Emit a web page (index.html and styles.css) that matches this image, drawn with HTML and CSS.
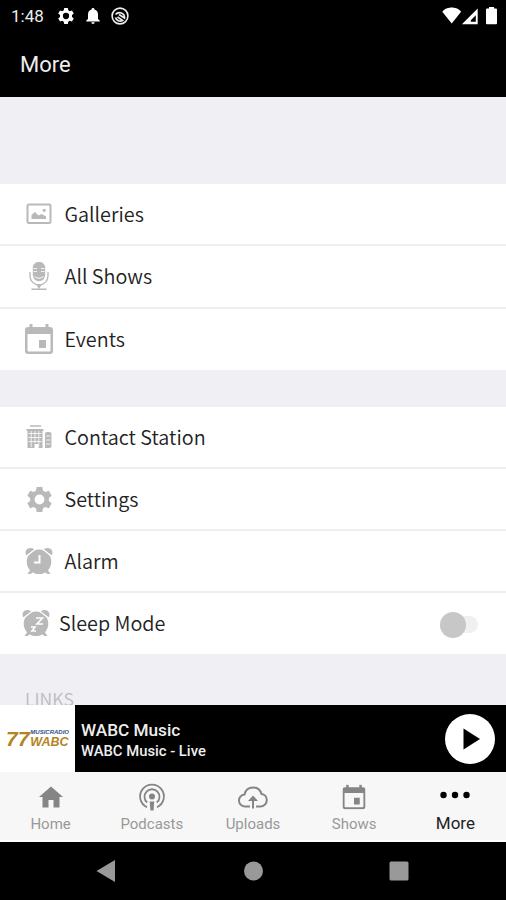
FILE: index.html
```html
<!doctype html>
<html lang="en">
<head>
  <meta charset="utf-8">
  <title>More</title>
  <meta name="viewport" content="width=device-width, initial-scale=1">
  <link rel="stylesheet" href="styles.css">
</head>

<body>

  <svg class="defs" width="0" height="0">
    <symbol id="gear" viewBox="0 0 24 24">
      <path fill-rule="evenodd" d="M9.300 0h5.400l.7 3.500 2.200 1.300 3.400-1.200 2.700 4.700-2.700 2.300v2.800l2.700 2.300-2.700 4.700-3.400-1.200-2.200 1.300-.7 3.500H9.300l-.7-3.500-2.200-1.300L3 20.400.3 15.700 3 13.400v-2.800L.3 8.300 3 3.600l3.400 1.200 2.200-1.300zM12 7.300a4.700 4.700 0 1 0 0 9.400 4.700 4.700 0 1 0 0-9.400z"/>
    </symbol>
    <symbol id="calendar" viewBox="0 0 28 30">
      <path fill-rule="evenodd" d="M4.500 0h3v3h13V0h3v3H25a3 3 0 0 1 3 3v21a3 3 0 0 1-3 3H3a3 3 0 0 1-3-3V6a3 3 0 0 1 3-3h1.500zM2.500 10v16.500q0 1 1 1h21q1 0 1-1V10z"/>
      <path d="M14 16h7v8h-7z"/>
    </symbol>
    <symbol id="clock" viewBox="0 0 28 28">
      <path d="M1.500 8.500C-.3 6.500.5 2.800 3 1.600 5.500.2 8.300 1 9.500 2.800zM26.500 8.500c1.800-2 1-5.700-1.500-6.900-2.500-1.400-5.300-.6-6.500 1.200z"/>
      <circle cx="14" cy="14.700" r="12.300"/>
      <path d="M5.500 22.500 2.500 27h3l4-3zM22.500 22.500l3 4.500h-3l-4-3z"/>
      <path d="M1 9.500 10.500 2M27 9.500 17.500 2" stroke="#fff" stroke-width="1.200"/>
    </symbol>
  </svg>

  <header>
    <div class="status">
      <span class="time">1:48</span>
      <svg class="status-gear" viewBox="0 0 24 24"><use href="#gear"/></svg>
      <svg class="status-bell" width="14" height="16" viewBox="0 0 14 16"><path d="M7 0a1.400 1.400 0 0 1 1.400 1.600C10.800 2.200 12 4.200 12 6.500V11l1.700 1.500v1H.3v-1L2 11V6.500C2 4.200 3.200 2.200 5.600 1.600A1.400 1.400 0 0 1 7 0zM5.300 14.300h3.400a1.700 1.700 0 0 1-3.400 0z"/></svg>
      <svg class="status-round" width="18" height="18" viewBox="0 0 18 18"><g fill="none" stroke="#eee"><circle cx="9" cy="9" r="7.900" stroke-width="1.600"/><path d="M4.600 7.500A5 5 0 0 1 13.500 11L8 7.500M4.500 10.500A4.800 4.800 0 0 0 11.500 13.400L6.500 10" stroke-width="1.700"/></g></svg>
      <svg class="status-right" width="56" height="18" viewBox="0 0 56 18"><path d="M.3 4.800C3.200 1.200 7 .5 9.700.5s6.500.7 9.400 4.300L9.700 16.500z"/><path fill-rule="evenodd" d="M35.700 1.500v15.700H19.900zM33.800 8.200l-5 5v1.600h5z"/><path d="M45 1.500h2V0h5v1.500h2q1 0 1 1v13.800q0 .9-.9.900h-9.200q-.9 0-.9-.9V2.500q0-1 1-1z"/></svg>
    </div>
    <h1>More</h1>
  </header>

  <main>
    <ul class="menu">
      <li><svg class="icon" viewBox="0 0 28 28"><rect x="2.500" y="4.500" width="23" height="18.500" rx="1.500" fill="none" stroke="#b9b9b9" stroke-width="2"/><path d="M6.500 19v-4l3.500-3 3.500 3.500 3-1.500 4.500 2.500V19z"/><circle cx="19.200" cy="10.300" r="1.600"/></svg>Galleries</li>
      <li><svg class="icon" viewBox="0 0 28 28"><path d="M7.800 6a6.200 6.200 0 0 1 12.400 0v7a6.200 6.200 0 0 1-12.400 0z"/><path d="M8.500 6.500H12M8.500 9.500H12M16 6.500h3.500M16 9.500h3.500" stroke="#fff" stroke-width=".8"/><path d="M5 10v4a9 9 0 0 0 18 0v-4" fill="none" stroke="#b9b9b9" stroke-width="1.300"/><path d="M9.500 14.500q4.500 3.500 9 0" fill="none" stroke="#fff"/><path d="M11 22h6l-3 5zM6.500 26.500h15v1.500h-15z"/></svg>All Shows</li>
      <li><svg class="icon cal" viewBox="0 0 28 30"><use href="#calendar"/></svg>Events</li>
    </ul>

    <ul class="menu">
      <li><svg class="icon" viewBox="0 0 28 28"><path d="M5 2.300h11v1.400H5zM1.500 6h17v1.800h-1V25h-4v-4h-4v4h-7V7.800h-1zM20 11q0-2 2-2h2.500q2 0 2 2v12q0 2-2 2H20z"/><path d="M3.500 10.500h13M3.500 14.500h13M3.500 18.500h13M6.200 8v16M10 8v12M13.800 8v16M21 13h4.500M21 17h4.500M21 21h4.500" stroke="#fff" stroke-width=".8"/></svg>Contact Station</li>
      <li><svg class="icon gear" viewBox="0 0 24 24"><use href="#gear"/></svg>Settings</li>
      <li><svg class="icon" viewBox="0 0 28 28"><use href="#clock"/><path d="M14.500 8v7.500H9" fill="none" stroke="#fff" stroke-width="2"/></svg>Alarm</li>
      <li class="sleep"><svg class="icon" viewBox="0 0 28 28"><use href="#clock"/><path d="M14 9h6.500L15 15h6M9 18h4l-3 4h4" fill="none" stroke="#fff" stroke-width="1.600"/></svg>Sleep Mode<span class="switch"></span></li>
    </ul>

    <h2>LINKS</h2>
  </main>

  <section class="player">
    <div class="logo">
      <span class="logo-num">77</span>
      <span class="logo-text"><small>MUSICRADIO</small><b>WABC</b></span>
    </div>
    <div class="track">
      <strong>WABC Music</strong>
      <span>WABC Music - Live</span>
    </div>
    <svg class="play" width="50" height="50" viewBox="0 0 50 50"><circle cx="25" cy="25" r="25" fill="#fff"/><path d="M18.500 14.500v21L35 25z"/></svg>
  </section>

  <nav class="tabs">
    <a><svg width="30" height="30" viewBox="0 0 30 30"><path d="M15 4.500 27 15h-3.500v10.500h-6V18h-5v7.500h-6V15H3z"/></svg>Home</a>
    <a><svg width="30" height="30" viewBox="0 0 30 30"><g fill="none" stroke="#858585" stroke-width="1.800"><path d="M10 25.300a11.900 11.900 0 1 1 10 0"/><path d="M10.200 20.500a7.500 7.500 0 1 1 9.600 0"/></g><circle cx="15" cy="14.500" r="3"/><path d="M12.800 19.500h4.400l-.6 9h-3.200z"/></svg>Podcasts</a>
    <a><svg width="30" height="30" viewBox="0 0 30 30"><path d="M12 24.500H7.500a6 6 0 0 1-1-12C7.500 8 11 5.500 15 5.500c4.500 0 7.500 2.800 8.500 6.500 3 .3 5.300 2.800 5.300 6s-2.500 6.500-5.800 6.500h-5" fill="none" stroke="#858585" stroke-width="2"/><path d="m15 13.500 5 5.500h-4v7.500h-2V19h-4z"/></svg>Uploads</a>
    <a><svg width="30" height="30" viewBox="0 0 30 30"><use href="#calendar" x="3.500" y="2.500" width="23" height="25"/></svg>Shows</a>
    <a class="active"><svg width="30" height="30" viewBox="0 0 30 30"><circle cx="3.500" cy="13" r="3.200"/><circle cx="15" cy="13" r="3.200"/><circle cx="26.500" cy="13" r="3.200"/></svg>More</a>
  </nav>

  <footer>
    <svg width="20" height="22" viewBox="0 0 20 22"><path d="M.5 11 19 0v22z"/></svg>
    <svg width="20" height="20" viewBox="0 0 20 20"><circle cx="10.500" cy="10" r="9.500"/></svg>
    <svg width="20" height="20" viewBox="0 0 20 20"><rect x=".5" y=".5" width="19" height="19" rx="1.500"/></svg>
  </footer>

</body>
</html>
```
FILE: styles.css
```css
* {
  box-sizing:border-box;
}
body {
  margin:0;
  height:900px;
  display:flex;
  flex-direction:column;
  overflow:hidden;
  background:#efeff4;
  font-family:Roboto, sans-serif;
}
.defs {
  display:none;
}
header {
  height:97px;
  background:#000;
  color:#eee;
}
.status {
  height:32px;
  padding:0 8px 0 11px;
  display:flex;
  align-items:center;
  fill:#fff;
}
.time {
  width:47px;
  font-size:17px;
}
.status-gear {
  width:16px;
  height:16px;
}
.status-bell {
  margin-left:12px;
}
.status-round {
  margin-left:11px;
}
.status-right {
  margin-left:auto;
}
h1 {
  margin:20px 0 0 20px;
  font-size:22px;
  line-height:26px;
  font-weight:400;
}
main {
  height:608px;
  padding-top:87px;
  overflow:hidden;
}
.menu {
  list-style:none;
  margin:0 0 37px;
  padding:0;
  background:#fff;
  color:#222;
  font:350 19.800px/60px "Noto Sans CJK SC", sans-serif;
}
.menu li {
  height:62.300px;
  padding:0 27px 0 25px;
  display:flex;
  align-items:center;
  border-bottom:2px solid #efeff1;
}
.menu li:last-child {
  height:61px;
  border-bottom:0;
}
.icon {
  width:28px;
  height:28px;
  margin-right:11.500px;
  fill:#b9b9b9;
}
.icon.gear {
  width:25px;
  height:25px;
  margin:0 12.500px 0 2px;
}
.icon.cal {
  height:30px;
}
.menu .sleep {
  padding:0 28px 2px 22px;
}
.sleep .icon {
  margin-right:9px;
}
.switch {
  width:38px;
  height:17px;
  margin:4px 0 0 auto;
  display:flex;
  align-items:center;
  border-radius:9px;
  background:#f0f0f0;
}
.switch::before {
  content:"";
  width:26px;
  height:26px;
  flex-shrink:0;
  border-radius:50%;
  background:#c7c7c7;
}
h2 {
  margin:-5px 0 0 25px;
  color:#bcbcc0;
  font:350 17.700px/24px "Noto Sans CJK SC", sans-serif;
}
.player {
  height:67px;
  display:flex;
  align-items:center;
  background:#000;
  color:#eee;
}
.logo {
  width:75px;
  height:67px;
  padding-left:6px;
  display:flex;
  align-items:center;
  background:#fff;
  color:#b38424;
  font-family:"Liberation Sans", sans-serif;
  font-style:italic;
}
.logo-num {
  font-size:21px;
  line-height:20px;
  font-weight:700;
}
.logo-text {
  margin-left:1px;
}
.logo-text small,
.logo-text b {
  display:block;
}
.logo-text small {
  color:#35517e;
  font-size:6px;
  line-height:7px;
  font-weight:700;
}
.logo-text b {
  font-size:12.500px;
  line-height:12px;
}
.track {
  flex:1;
  padding:3px 0 0 6px;
}
.track strong,
.track span {
  display:block;
  font-weight:500;
}
.track strong {
  font-size:17.200px;
  line-height:22px;
}
.track span {
  font-size:14.800px;
  line-height:21px;
}
.play {
  margin-right:11px;
}
.tabs {
  height:70px;
  padding:10px 0 0;
  display:flex;
  background:#f7f7f7;
  border-bottom:2px solid #fff;
}
.tabs a {
  flex:1;
  display:flex;
  flex-direction:column;
  align-items:center;
  color:#999;
  fill:#858585;
  font-size:15px;
  line-height:24px;
}
.tabs .active {
  color:#222;
  fill:#000;
  font-size:17px;
  line-height:23px;
}
footer {
  height:58px;
  display:flex;
  align-items:center;
  justify-content:space-between;
  padding:0 97px 0 96px;
  background:#000;
  fill:#999;
}
```
